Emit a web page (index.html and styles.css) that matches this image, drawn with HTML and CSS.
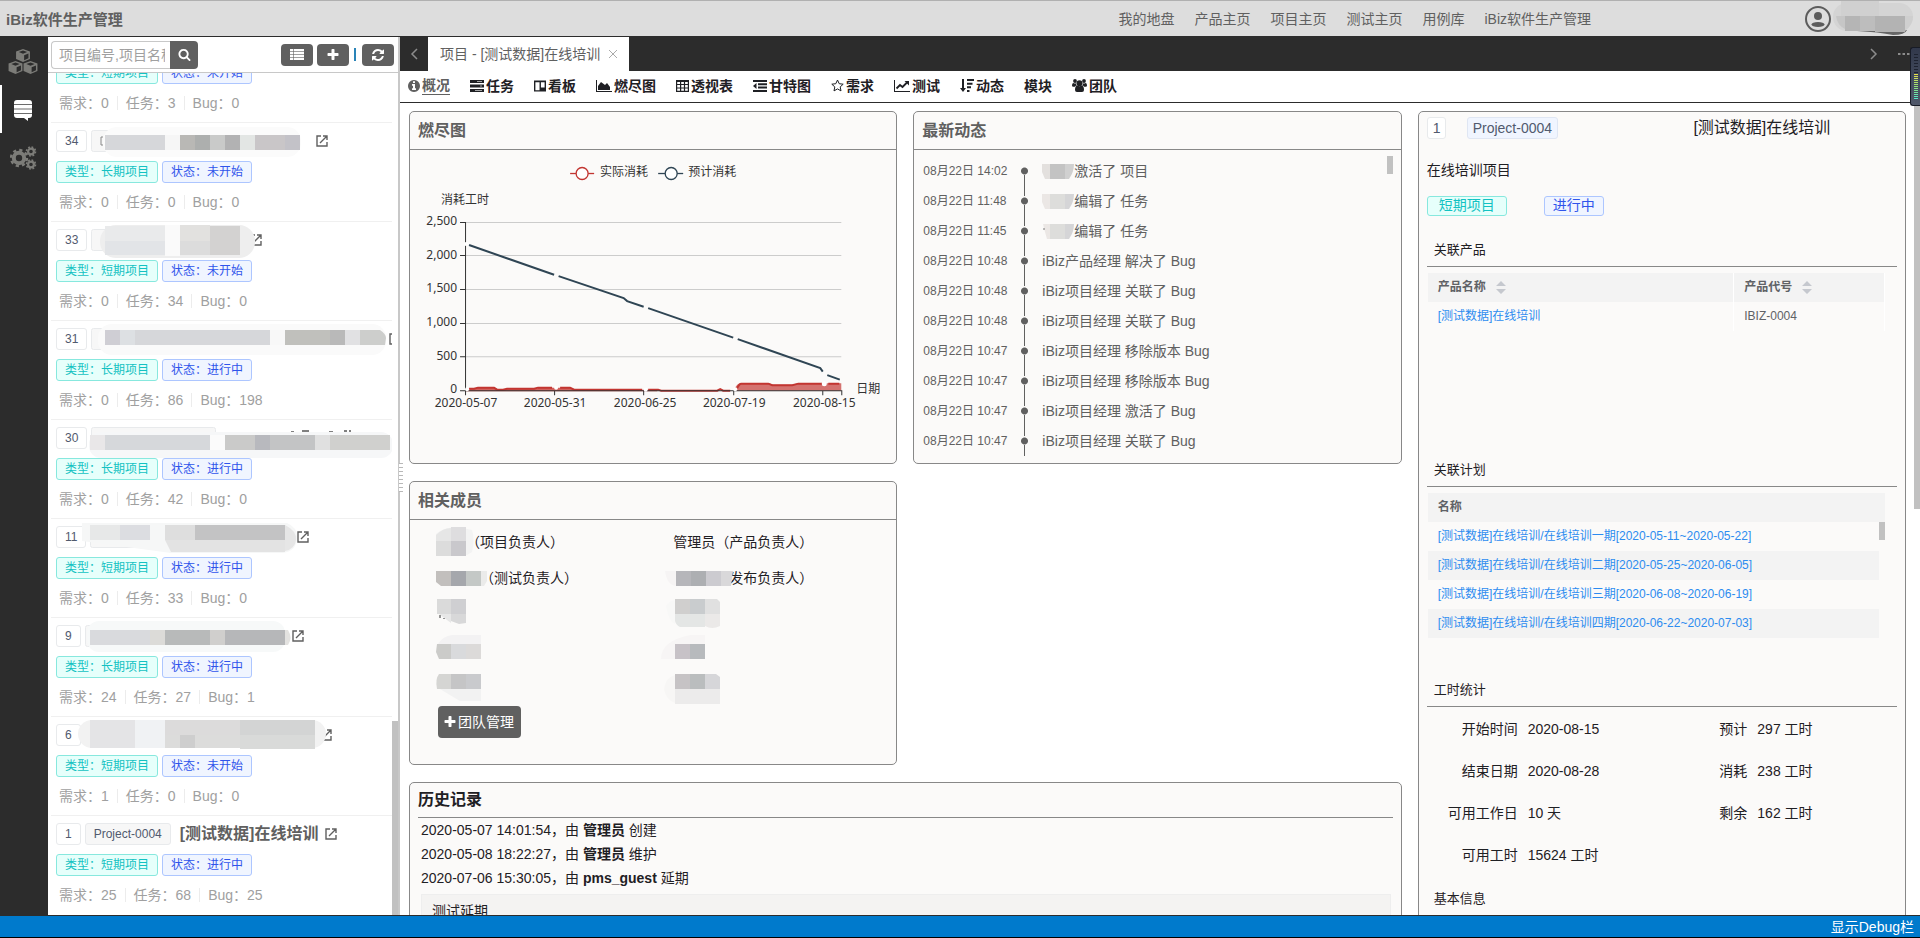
FILE: index.html
```html
<!DOCTYPE html>
<html lang="zh-CN">
<head>
<meta charset="utf-8">
<title>iBiz软件生产管理</title>
<link rel="stylesheet" href="styles.css">
</head>
<body>
<svg class="defs" aria-hidden="true">
  <symbol id="i-plus" viewBox="0 0 1792 1792"><path d="M1600 736v192q0 40-28 68t-68 28h-416v416q0 40-28 68t-68 28h-192q-40 0-68-28t-28-68v-416h-416q-40 0-68-28t-28-68v-192q0-40 28-68t68-28h416v-416q0-40 28-68t68-28h192q40 0 68 28t28 68v416h416q40 0 68 28t28 68z"/></symbol>
  <symbol id="i-search" viewBox="0 0 1792 1792"><path d="M1216 832q0-185-131.500-316.500t-316.500-131.500-316.500 131.500-131.500 316.500 131.500 316.500 316.500 131.500 316.500-131.500 131.500-316.500zm512 832q0 52-38 90t-90 38q-54 0-90-38l-343-342q-179 124-399 124-143 0-273.500-55.500t-225-150-150-225-55.500-273.500 55.500-273.500 150-225 225-150 273.500-55.500 273.500 55.500 225 150 150 225 55.500 273.500q0 220-124 399l343 343q37 37 37 90z"/></symbol>
  <symbol id="i-refresh" viewBox="128 128 1536 1536"><path d="M1639 1056q0 5-1 7-64 268-268 434.500t-478 166.500q-146 0-282.500-55t-243.500-157l-129 129q-19 19-45 19t-45-19-19-45v-448q0-26 19-45t45-19h448q26 0 45 19t19 45-19 45l-137 137q71 66 161 102t187 36q134 0 250-65t186-179q11-17 53-117 8-23 30-23h192q13 0 22.500 9.500t9.500 22.500zm25-800v448q0 26-19 45t-45 19h-448q-26 0-45-19t-19-45 19-45l138-138q-148-137-349-137-134 0-250 65t-186 179q-11 17-53 117-8 23-30 23h-199q-13 0-22.500-9.500t-9.500-22.500v-7q65-268 270-434.500t480-166.500q146 0 284 55.500t245 156.500l130-129q19-19 45-19t45 19 19 45z"/></symbol>
  <symbol id="i-info" viewBox="128 128 1536 1536"><path d="M1152 1376v-160q0-14-9-23t-23-9h-96v-512q0-14-9-23t-23-9h-320q-14 0-23 9t-9 23v160q0 14 9 23t23 9h96v320h-96q-14 0-23 9t-9 23v160q0 14 9 23t23 9h448q14 0 23-9t9-23zm-128-896v-160q0-14-9-23t-23-9h-192q-14 0-23 9t-9 23v160q0 14 9 23t23 9h192q14 0 23-9t9-23zm640 416q0 209-103 385.500t-279.500 279.500-385.500 103-385.500-103-279.500-279.500-103-385.500 103-385.500 279.500-279.500 385.500-103 385.500 103 279.500 279.500 103 385.500z"/></symbol>
  <symbol id="i-open" viewBox="0 0 12 12"><path d="M5 1H1v10h10V7M7 1h4v4M11 1 4 8" fill="none" stroke="currentColor" stroke-width="1.4"/></symbol>
  <symbol id="i-sort" viewBox="0 0 10 13"><path d="M0 5 5 0l5 5zM0 8h10l-5 5z"/></symbol>
  <symbol id="i-cube" viewBox="0 0 16 15"><path d="M8 0l8 3v8.500L8 15l-8-3.500V3z"/><path d="M8 1.800 12.800 3.600 8 5.600 3.200 3.600zM9.300 7.200l5-2.100v5.600l-5 2.300z" fill="#2c2c2c"/></symbol>
</svg>

<header class="topbar">
  <h1 class="brand">iBiz软件生产管理</h1>
  <nav class="topnav">
    <a href="#">我的地盘</a><a href="#">产品主页</a><a href="#">项目主页</a><a href="#">测试主页</a><a href="#">用例库</a><a href="#">iBiz软件生产管理</a>
  </nav>
  <div class="user">
    <svg class="avatar" width="26" height="26" viewBox="0 0 26 26"><circle cx="13" cy="13" r="12" fill="none" stroke="#5c5c5c" stroke-width="2"/><circle cx="13" cy="10" r="4" fill="#5c5c5c"/><ellipse cx="13" cy="18.500" rx="6.500" ry="2.600" fill="#5c5c5c"/></svg>
    <svg width="80" height="36" viewBox="0 0 80 36"><rect y="2" width="80" height="28" rx="14" fill="#d4d4d4"/><path d="M8 0h38v15H8z" fill="#d0d0d0"/><path d="M24 29h50q-2 5-14 5-14-3-36-4z" fill="#666"/><path d="M3 15h9v13Q4 24 3 15z" fill="#c6c6c6"/><path d="M12 15h15v15H12z" fill="#b5b5b5"/><path d="M27 15h15v15H27z" fill="#bdbdbd"/><path d="M42 15h30v16H42z" fill="#b3b3b3"/><path d="M72 15h8q0 9-8 15z" fill="#cfcfcf"/></svg>
  </div>
</header>

<div class="workspace">
  <nav class="rail">
    <a href="#" class="rail-item" aria-label="产品"><svg width="30" height="26" viewBox="0 0 30 26" fill="#7c7c78"><use href="#i-cube" x="7.500" y="0" width="15" height="13"/><use href="#i-cube" x="0" y="12" width="15" height="13"/><use href="#i-cube" x="15" y="12" width="15" height="13"/></svg></a>
    <a href="#" class="rail-item rail-active" aria-label="项目"><svg width="18" height="21" viewBox="0 0 18 21"><path d="M3 0h12q3 0 3 3v12q0 3-3 3h-1v3l-4-3H3q-3 0-3-3V3q0-3 3-3z" fill="#fff"/><path d="M0 4.500h18M0 9h18M0 13.500h18" stroke="#2c2c2c" stroke-width=".7"/></svg></a>
    <a href="#" class="rail-item" aria-label="设置"><svg width="27" height="24" viewBox="0 0 27 24"><g fill="none" stroke="#7c7c78"><circle cx="9" cy="12" r="5.200" stroke-width="4"/><circle cx="9" cy="12" r="8" stroke-width="2.400" stroke-dasharray="3.200 3.083"/><circle cx="21" cy="5.500" r="2.900" stroke-width="2.200"/><circle cx="21" cy="5.500" r="4.500" stroke-width="1.600" stroke-dasharray="1.800 1.734"/><circle cx="21" cy="18.500" r="2.900" stroke-width="2.200"/><circle cx="21" cy="18.500" r="4.500" stroke-width="1.600" stroke-dasharray="1.800 1.734"/></g></svg></a>
  </nav>

  <aside class="projects">
    <div class="toolbar">
      <form class="search">
        <input type="text" placeholder="项目编号,项目名称" aria-label="项目编号,项目名称">
        <button type="button" aria-label="搜索"><svg class="glyph" width="13" height="13"><use href="#i-search"/></svg></button>
      </form>
      <div class="tools">
        <button type="button" aria-label="列表"><svg width="14" height="11" viewBox="0 0 14 11"><path d="M0 0h14v11H0z" fill="#fff"/><path d="M0 2.500h14M0 5.500h14M0 8.500h14M3.500 0v11" stroke="#606060" stroke-width=".6"/></svg></button>
        <button type="button" aria-label="新建"><svg class="glyph" width="14" height="14"><use href="#i-plus"/></svg></button>
        <span class="tool-sep"></span>
        <button type="button" aria-label="刷新"><svg class="glyph" width="12" height="12"><use href="#i-refresh"/></svg></button>
      </div>
    </div>
    <div class="list-wrap">
      <ul class="list">
        <li class="item">
          <div class="item-title"></div>
          <div class="tags"><span class="tag tag-type">类型：短期项目</span><span class="tag tag-state">状态：未开始</span></div>
          <div class="stats"><span>需求：0</span><span>任务：3</span><span>Bug：0</span></div>
        </li>
        <li class="item">
          <div class="item-title"><span class="badge">34</span>
            <svg class="mask" width="225" height="22"><g transform="translate(-40 -7)"><rect x="40.500" y="7.500" width="40" height="21" rx="2" fill="#f7f7f7" stroke="#e8eaec"/><path d="M52 14h-2v8h2" fill="none" stroke="#888"/><rect x="52" y="4" width="198" height="30" rx="14" fill="#fbfbfb"/><path d="M54 12h60v15H54z" fill="#d6d7da"/><path d="M114 12h15v15h-15z" fill="#f6f6f6"/><path d="M129 12h15v15h-15z" fill="#b9b8b5"/><path d="M144 12h15v15h-15z" fill="#adafae"/><path d="M159 12h15v15h-15z" fill="#c9cac9"/><path d="M174 12h15v15h-15z" fill="#b2b2b3"/><path d="M189 12h15v15h-15z" fill="#e3e6e4"/><path d="M204 12h30v15h-30z" fill="#c9c6c8"/><path d="M234 12h15v15h-15z" fill="#c3c2c8"/></g></svg>
            <a href="#" class="open" aria-label="打开"><svg width="12" height="12"><use href="#i-open"/></svg></a></div>
          <div class="tags"><span class="tag tag-type">类型：长期项目</span><span class="tag tag-state">状态：未开始</span></div>
          <div class="stats"><span>需求：0</span><span>任务：0</span><span>Bug：0</span></div>
        </li>
        <li class="item">
          <div class="item-title"><span class="badge">33</span>
            <svg class="mask" width="159" height="22"><g transform="translate(-40 -7)"><rect x="40.500" y="7.500" width="40" height="21" rx="2" fill="#f7f7f7" stroke="#e8eaec"/><rect x="49" y="3" width="155" height="33" rx="16" fill="#eeeeee"/><path d="M54 4h60v15H54z" fill="#e9eaeb"/><path d="M54 19h60v14H54z" fill="#e2e4e7"/><path d="M114 3h15v31h-15z" fill="#fafafa"/><path d="M129 3h30v16h-30z" fill="#e2e1df"/><path d="M129 19h30v14h-30z" fill="#dcdcdc"/><path d="M159 4h30v29h-30z" fill="#d3d2d1"/></g></svg>
            <a href="#" class="open" aria-label="打开"><svg width="12" height="12"><use href="#i-open"/></svg></a></div>
          <div class="tags"><span class="tag tag-type">类型：短期项目</span><span class="tag tag-state">状态：未开始</span></div>
          <div class="stats"><span>需求：0</span><span>任务：34</span><span>Bug：0</span></div>
        </li>
        <li class="item">
          <div class="item-title"><span class="badge">31</span>
            <svg class="mask" width="298" height="22"><g transform="translate(-40 -7)"><rect x="40.500" y="7.500" width="40" height="21" rx="2" fill="#f7f7f7" stroke="#e8eaec"/><rect x="47" y="3" width="288" height="31" rx="14" fill="#fafafa"/><path d="M54 9h15v15H54z" fill="#cfced4"/><path d="M69 9h15v15H69z" fill="#dde0e3"/><path d="M84 9h135v15H84z" fill="#d6d7da"/><path d="M219 9h15v15h-15z" fill="#f8f8f8"/><path d="M234 9h45v15h-45z" fill="#c0c0bc"/><path d="M279 9h15v15h-15z" fill="#b9b9b9"/><path d="M294 9h15v15h-15z" fill="#e1e1e3"/><path d="M309 9h20q6 4 6 8l-1 7h-25z" fill="#cdcecc"/></g></svg>
            <a href="#" class="open" aria-label="打开"><svg width="12" height="12"><use href="#i-open"/></svg></a></div>
          <div class="tags"><span class="tag tag-type">类型：长期项目</span><span class="tag tag-state">状态：进行中</span></div>
          <div class="stats"><span>需求：0</span><span>任务：86</span><span>Bug：198</span></div>
        </li>
        <li class="item">
          <div class="item-title"><span class="badge">30</span>
            <svg class="mask" width="301" height="22"><g transform="translate(-40 -7)"><rect x="40.500" y="7.500" width="124" height="21" rx="2" fill="#f7f7f7" stroke="#e8eaec"/><path d="M240 12h3m8-1h7m20 1h4m11-1h3m2 0h2" stroke="#555" stroke-width="1.500"/><rect x="38" y="12" width="304" height="26" rx="12" fill="#f6f7f8"/><path d="M39 15h15v15H39z" fill="#e9e7e8"/><path d="M54 15h105v15H54z" fill="#d6d8db"/><path d="M159 15h15v15h-15z" fill="#fbfbfb"/><path d="M174 15h30v15h-30z" fill="#cacac9"/><path d="M204 15h15v15h-15z" fill="#b8b9be"/><path d="M219 15h45v15h-45z" fill="#c3c4c5"/><path d="M264 15h15v15h-15z" fill="#e0e0e0"/><path d="M279 15h60v15h-60z" fill="#d0d0ce"/></g></svg></div>
          <div class="tags"><span class="tag tag-type">类型：长期项目</span><span class="tag tag-state">状态：进行中</span></div>
          <div class="stats"><span>需求：0</span><span>任务：42</span><span>Bug：0</span></div>
        </li>
        <li class="item">
          <div class="item-title"><span class="badge">11</span>
            <svg class="mask" width="207" height="22"><g transform="translate(-39 -7)"><rect x="39.500" y="7.500" width="60" height="21" rx="2" fill="#f7f7f7" stroke="#e8eaec"/><path d="M31 4h205q10 4 10 14 0 14-14 16H120L31 22z" fill="#f6f7f7"/><path d="M39 6h30v15H39z" fill="#e7e8e8"/><path d="M69 6h30v15H69z" fill="#dcdde1"/><path d="M114 6h30v15h-30z" fill="#dedede"/><path d="M144 6h90v15h-90z" fill="#c3c3c4"/><path d="M114 21h120v12H120z" fill="#e3e3e3"/><path d="M234 6q12 6 11 15t-11 11z" fill="#e6e6e6"/></g></svg>
            <a href="#" class="open" aria-label="打开"><svg width="12" height="12"><use href="#i-open"/></svg></a></div>
          <div class="tags"><span class="tag tag-type">类型：短期项目</span><span class="tag tag-state">状态：进行中</span></div>
          <div class="stats"><span>需求：0</span><span>任务：33</span><span>Bug：0</span></div>
        </li>
        <li class="item">
          <div class="item-title"><span class="badge">9</span>
            <svg class="mask" width="207" height="22"><g transform="translate(-34 -7)"><rect x="34.500" y="7.500" width="40" height="21" rx="2" fill="#f7f7f7" stroke="#e8eaec"/><rect x="36" y="3" width="198" height="31" rx="12" fill="#f7f9f9"/><path d="M39 12h60v15H39z" fill="#d9dadd"/><path d="M99 12h15v15H99z" fill="#dcdbd8"/><path d="M114 12h45v15h-45z" fill="#b8baba"/><path d="M159 12h15v15h-15z" fill="#d0cfcd"/><path d="M174 12h60v15h-60z" fill="#b6b7b9"/><path d="M234 12h3q5 8 0 15h-3z" fill="#e3e2e0"/></g></svg>
            <a href="#" class="open" aria-label="打开"><svg width="12" height="12"><use href="#i-open"/></svg></a></div>
          <div class="tags"><span class="tag tag-type">类型：长期项目</span><span class="tag tag-state">状态：进行中</span></div>
          <div class="stats"><span>需求：24</span><span>任务：27</span><span>Bug：1</span></div>
        </li>
        <li class="item">
          <div class="item-title"><span class="badge">6</span>
            <svg class="mask" width="235" height="22"><g transform="translate(-34 -7)"><rect x="27" y="3" width="248" height="28" rx="14" fill="#f2f2f2"/><path d="M39 3h45v28H39z" fill="#e4e4e6"/><path d="M84 3h30v28H84z" fill="#f0f2f4"/><path d="M114 3h75v15h-75z" fill="#dcdbdb"/><path d="M114 18h75v13h-75z" fill="#dcdcdb"/><path d="M129 18h15v13h-15z" fill="#cecece"/><path d="M189 3h75v15h-75z" fill="#d3d4d4"/><path d="M189 18h75v14h-75z" fill="#d9dad9"/></g></svg>
            <a href="#" class="open" aria-label="打开"><svg width="12" height="12"><use href="#i-open"/></svg></a></div>
          <div class="tags"><span class="tag tag-type">类型：短期项目</span><span class="tag tag-state">状态：未开始</span></div>
          <div class="stats"><span>需求：1</span><span>任务：0</span><span>Bug：0</span></div>
        </li>
        <li class="item">
          <div class="item-title"><span class="badge">1</span><span class="badge badge-code">Project-0004</span><strong class="name">[测试数据]在线培训</strong><a href="#" class="open" aria-label="打开"><svg width="12" height="12"><use href="#i-open"/></svg></a></div>
          <div class="tags"><span class="tag tag-type">类型：短期项目</span><span class="tag tag-state">状态：进行中</span></div>
          <div class="stats"><span>需求：25</span><span>任务：68</span><span>Bug：25</span></div>
        </li>
      </ul>
      <div class="track track-list"><span class="thumb"></span></div>
    </div>
  </aside>

  <main class="main">
    <div class="grip"></div>
    <div class="tabbar">
      <button type="button" class="tab-arrow" aria-label="向左"><svg width="8" height="12" viewBox="0 0 8 12"><path d="M7 1 2 6l5 5" fill="none" stroke="#8c8c8c" stroke-width="1.500"/></svg></button>
      <div class="tab">项目 - [测试数据]在线培训<button type="button" class="tab-close" aria-label="关闭"><svg width="8" height="8" viewBox="0 0 8 8"><path d="m0 0 8 8M8 0 0 8" stroke="#aaa"/></svg></button></div>
      <button type="button" class="tab-arrow tab-right" aria-label="向右"><svg width="8" height="12" viewBox="0 0 8 12"><path d="m1 1 5 5-5 5" fill="none" stroke="#8c8c8c" stroke-width="1.500"/></svg></button>
      <button type="button" class="tab-more" aria-label="更多"><svg width="12" height="2"><path d="M0 1h2.500m2 0H7m2 0h2.500" stroke="#8c8c8c" stroke-width="2"/></svg></button>
    </div>
    <nav class="subnav">
      <a href="#" class="current"><svg class="glyph" width="12" height="12"><use href="#i-info"/></svg><span>概况</span></a>
      <a href="#"><svg width="14" height="12" viewBox="0 0 14 12"><path d="M0 0h14v3H0zM0 4.500h14v3H0zM0 9h14v3H0z"/><path d="M7 1.500h5M5 10.500h7M10 6h2" stroke="#fff" stroke-width=".6"/></svg><span>任务</span></a>
      <a href="#"><svg width="12" height="12" viewBox="0 0 13 12"><path d="M0 0h13v12H0zM1.500 2v8.500H6V2zM7.500 2v5.500h4V2z" fill-rule="evenodd"/></svg><span>看板</span></a>
      <a href="#"><svg width="16" height="12" viewBox="0 0 16 12"><path d="M0 0h1v11h15v1H0zM2 10V6l3-4 4 3 2-2 3 4v3z"/></svg><span>燃尽图</span></a>
      <a href="#"><svg width="13" height="12" viewBox="0 0 13 12"><path d="M.6 1h11.800v10.400H.6zM.6 4.500h11.800M.6 8h11.800M4.600 1v10.400M8.500 1v10.400" fill="none" stroke="#1f2024" stroke-width="1.200"/><path d="M0 0h13v2H0z"/></svg><span>透视表</span></a>
      <a href="#"><svg width="14" height="12" viewBox="0 0 14 12"><path d="M0 0h14v2H0zM5 3.300h9v2H5zM5 6.600h9v2H5zM0 10h14v2H0zM3.500 3v6L0 6z"/></svg><span>甘特图</span></a>
      <a href="#"><svg width="13" height="13" viewBox="0 0 13 13"><path d="m6.500 1 1.700 3.700 4 .5-3 2.700.8 4-3.500-2-3.500 2 .8-4-3-2.700 4-.5z" fill="none" stroke="#1f2024"/></svg><span>需求</span></a>
      <a href="#"><svg width="16" height="12" viewBox="0 0 16 12"><path d="M0 0h1v11h15v1H0z"/><path d="m2.500 8.500 3.500-3.500 2.500 2L13 2.500" fill="none" stroke="#1f2024" stroke-width="1.800"/><path d="M10.500 1H15v4.500z"/></svg><span>测试</span></a>
      <a href="#"><svg width="14" height="13" viewBox="0 0 14 13"><path d="M2 0h2v9h2l-3 4-3-4h2zM7 0h7v2H7zM7 3.700h5.500v2H7zM7 7.300h4v2H7zM7 11h2.500v2H7z"/></svg><span>动态</span></a>
      <a href="#"><span>模块</span></a>
      <a href="#"><svg width="15" height="13" viewBox="0 0 15 13"><circle cx="7.500" cy="4.200" r="3"/><circle cx="3" cy="2" r="1.900"/><circle cx="12" cy="2" r="1.900"/><path d="M3 11q0-4.500 2.500-4.500 2 1.500 4 0Q12 6.500 12 11q0 2-2 2H5q-2 0-2-2zM0 6.500Q0 4 1.300 4q1 .8 2.500.3.200 1.400 1 2.200-1 0-2 1.200H1.300Q0 7.700 0 6.500zM15 6.500Q15 4 13.700 4q-1 .8-2.500.3-.2 1.400-1 2.200 1 0 2 1.200h1.500q1.300 0 1.300-1.200z"/></svg><span>团队</span></a>
    </nav>

    <div class="scroll">
      <div class="board">
        <section class="card">
          <h2 class="card-head">燃尽图</h2>
          <svg class="chart" viewBox="0 0 486 313" role="img" aria-label="燃尽图">
            <g transform="translate(-410 -150)">
              <g stroke-width="1.300" fill="#fff"><path d="M570 173.500h24" stroke="#c23531"/><circle cx="582" cy="173.500" r="6" stroke="#c23531"/><path d="M658 173.500h25" stroke="#2f4554"/><circle cx="671" cy="173.500" r="6" stroke="#2f4554"/></g>
              <g class="chart-text"><text x="600" y="176">实际消耗</text><text x="688" y="176">预计消耗</text><text x="465" y="204" text-anchor="middle">消耗工时</text>
              <g text-anchor="end"><text x="457" y="225">2,500</text><text x="457" y="259">2,000</text><text x="457" y="292">1,500</text><text x="457" y="326">1,000</text><text x="457" y="360">500</text><text x="457" y="393">0</text></g>
              <g text-anchor="middle"><text x="466" y="407">2020-05-07</text><text x="555" y="407">2020-05-31</text><text x="645" y="407">2020-06-25</text><text x="734" y="407">2020-07-19</text><text x="824" y="407">2020-08-15</text></g><text x="856" y="393">日期</text></g>
              <path d="M466 222.500h375M466 255.500h375M466 289.500h375M466 323.500h375M466 356.500h375" stroke="#ccc"/>
              <path d="M465 388.500h8l4-1h18l3 2h6l4-1h28l3-1h32l4 2h82v1.500H465z" fill="#d2605c"/>
              <path d="M734 390v-1q3-6 6-6h29l4 1.500h19l6-1.500h43v7.500H734z" fill="#d4726f"/>
              <path d="M469 388.500h5l4-1h16l3 2h6l4-1h27l4-1h14M560 387.500h10l4 2h68M648 389.500h10l3 1h56l3-1.500 3 1.500h7M737 388q2-4.500 4-4.500h27l4 1.500h20l6-1.500h24M828 383.500h11" fill="none" stroke="#c23531" stroke-width="2"/>
              <path d="M465.500 222v168.500h376M460 222.500h5M460 255.500h5M460 289.500h5M460 323.500h5M460 356.500h5M460 390.500h5M465.500 390v5M554.500 390v5M643.500 390v5M733.500 390v5M822.500 390v5M841.500 390v5" fill="none" stroke="#333"/>
              <path d="m469 245 85 29.600M558.500 276l65 22 3.500 3 16.500 5.600M648 308l85 29.500M737.500 339l82.500 29 2.500 3.500M827 375l12.500 4.500" fill="none" stroke="#2f4554" stroke-width="2"/>
              <g fill="#fff"><circle cx="466" cy="244" r="2"/><circle cx="467" cy="389" r="2"/><circle cx="556" cy="387.500" r="2"/><circle cx="645.500" cy="389.500" r="2"/><circle cx="735" cy="389" r="2"/><circle cx="824" cy="383.500" r="2.500"/></g>
            </g>
          </svg>
        </section>

        <section class="card">
          <h2 class="card-head">最新动态</h2>
          <div class="feed-wrap">
            <ol class="feed">
              <li><time>08月22日 14:02</time><i class="dot"></i><span><svg class="who" width="32" height="15"><path d="M0 0h8v15H3L0 8z" fill="#e3e0de"/><path d="M8 0h15v15H8z" fill="#c3c3c3"/><path d="M23 0h9q0 8-5 15h-4z" fill="#d0d0d0"/></svg>激活了 项目</span></li>
              <li><time>08月22日 11:48</time><i class="dot"></i><span><svg class="who" width="32" height="15"><path d="M0 0h8v15H3L0 8z" fill="#ebe7e5"/><path d="M8 0h15v15H8z" fill="#dddddb"/><path d="M23 0h9q0 8-5 15h-4z" fill="#d5d5d7"/></svg>编辑了 任务</span></li>
              <li><time>08月22日 11:45</time><i class="dot"></i><span><svg class="who" width="32" height="15"><path d="M1 0h7v15H5L3 8z" fill="#ebe7e5"/><path d="M1 5h2" stroke="#777"/><path d="M8 0h15v15H8z" fill="#dddddb"/><path d="M23 0h9q0 8-5 15h-4z" fill="#d5d5d7"/></svg>编辑了 任务</span></li>
              <li><time>08月22日 10:48</time><i class="dot"></i><span>iBiz产品经理 解决了 Bug</span></li>
              <li><time>08月22日 10:48</time><i class="dot"></i><span>iBiz项目经理 关联了 Bug</span></li>
              <li><time>08月22日 10:48</time><i class="dot"></i><span>iBiz项目经理 关联了 Bug</span></li>
              <li><time>08月22日 10:47</time><i class="dot"></i><span>iBiz项目经理 移除版本 Bug</span></li>
              <li><time>08月22日 10:47</time><i class="dot"></i><span>iBiz项目经理 移除版本 Bug</span></li>
              <li><time>08月22日 10:47</time><i class="dot"></i><span>iBiz项目经理 激活了 Bug</span></li>
              <li><time>08月22日 10:47</time><i class="dot"></i><span>iBiz项目经理 关联了 Bug</span></li>
            </ol>
            <div class="track"><span class="thumb"></span></div>
          </div>
        </section>

        <section class="card detail">
          <div class="detail-top"><span class="badge badge-big">1</span><span class="badge badge-project">Project-0004</span><h2>[测试数据]在线培训</h2></div>
          <p class="desc">在线培训项目</p>
          <div class="detail-tags"><span class="tag tag-type tag-wide">短期项目</span><span class="tag tag-state tag-mid">进行中</span></div>
          <h3 class="section-title">关联产品</h3>
          <div class="section-body">
            <table class="grid">
              <thead><tr><th class="col-name">产品名称<svg class="sort" width="10" height="13"><use href="#i-sort"/></svg></th><th>产品代号<svg class="sort" width="10" height="13"><use href="#i-sort"/></svg></th></tr></thead>
              <tbody><tr><td><a href="#">[测试数据]在线培训</a></td><td>IBIZ-0004</td></tr></tbody>
            </table>
          </div>
          <h3 class="section-title">关联计划</h3>
          <div class="section-body">
            <div class="plan-head">名称</div>
            <div class="plan-wrap">
              <table class="grid striped">
                <tbody>
                  <tr><td><a href="#">[测试数据]在线培训/在线培训一期[2020-05-11~2020-05-22]</a></td></tr>
                  <tr><td><a href="#">[测试数据]在线培训/在线培训二期[2020-05-25~2020-06-05]</a></td></tr>
                  <tr><td><a href="#">[测试数据]在线培训/在线培训三期[2020-06-08~2020-06-19]</a></td></tr>
                  <tr><td><a href="#">[测试数据]在线培训/在线培训四期[2020-06-22~2020-07-03]</a></td></tr>
                </tbody>
              </table>
              <div class="track"><span class="thumb"></span></div>
            </div>
          </div>
          <h3 class="section-title">工时统计</h3>
          <dl class="hours">
            <dt>开始时间</dt><dd>2020-08-15</dd><dt>预计</dt><dd>297 工时</dd>
            <dt>结束日期</dt><dd>2020-08-28</dd><dt>消耗</dt><dd>238 工时</dd>
            <dt>可用工作日</dt><dd>10 天</dd><dt>剩余</dt><dd>162 工时</dd>
            <dt>可用工时</dt><dd>15624 工时</dd>
          </dl>
          <h3 class="section-title">基本信息</h3>
        </section>

        <section class="card">
          <h2 class="card-head">相关成员</h2>
          <div class="members">
            <div class="member"><svg width="28" height="30"><path d="M-2 7Q6 0 20 0l14 3q3 10 0 22l-5 3H-2z" fill="#f3f3f3"/><path d="M-2 8Q5 1 13 1v13H-2z" fill="#e6e6e6"/><path d="M13 0h15v14H13z" fill="#dedddf"/><path d="M-2 14h15v15H-2z" fill="#dcdcdc"/><path d="M13 14h15v15H13z" fill="#c9c8cc"/></svg>（项目负责人）</div>
            <div class="member">管理员（产品负责人）</div>
            <div class="member"><svg width="42" height="15"><path d="M-2 0h15v15H3l-5-4z" fill="#c2bfbd"/><path d="M13 0h15v15H13z" fill="#a5a7ac"/><path d="M28 0h15v15H28z" fill="#c4c8c6"/><path d="M43 0h6v10l-3 5h-3z" fill="#ebebea"/></svg>（测试负责人）</div>
            <div class="member"><svg width="42" height="15"><path d="M-8 0H3v15Q-6 14-8 0z" fill="#f6f4f4"/><path d="M3 0h15v15H3z" fill="#b6b6ba"/><path d="M18 0h15v15H18z" fill="#adafb2"/><path d="M33 0h15v15H33z" fill="#cccbd0"/><path d="M48 0h12l-2 15H48z" fill="#d9d8da"/></svg>（发布负责人）</div>
            <div class="member"><svg width="42" height="30"><path d="M-1 0h14v15H-1z" fill="#dadada"/><path d="M13 0h15v15H13z" fill="#cfcfd2"/><path d="M1 15h12v9z" fill="#e7e7e7"/><path d="M13 15h15v9l-7 1-8-3z" fill="#d8d8d9"/><path d="M2 16v3m4 0v1" stroke="#333"/></svg></div>
            <div class="member"><svg width="42" height="30"><path d="M-7 7Q-4 2 2 1v24Q-4 23-7 7z" fill="#f8f8f7"/><path d="M2 0h15v15H2z" fill="#d0cfce"/><path d="M17 0h15v15H17z" fill="#c9ccce"/><path d="M32 0h12l3 3v12H32z" fill="#e0e0e0"/><path d="M2 15h30v13H7q-4-2-5-6z" fill="#e4e6e5"/><path d="M32 15h15v12q-8 4-15 0z" fill="#ebe9e8"/></svg></div>
            <div class="member"><svg width="42" height="30"><path d="M0 9Q5 1 14 0h29v9H0z" fill="#f3f2f3"/><path d="M-1 9h14v15H1l-3-7z" fill="#cbcbc9"/><path d="M13 9h15v15H13z" fill="#d9dadc"/><path d="M28 9h15v15H28z" fill="#dcdad9"/></svg></div>
            <div class="member"><svg width="42" height="30"><path d="M-12 24Q-12 6 17 0h15v24z" fill="#f7f5f5"/><path d="M2 9h15v15H2z" fill="#c7c2c7"/><path d="M17 9h15v15H17z" fill="#b7babd"/></svg></div>
            <div class="member"><svg width="42" height="30"><path d="M1 3h12v15H-1q-2-10 2-15z" fill="#d5d5d3"/><path d="M13 3h15v15H13z" fill="#c5c5c6"/><path d="M28 3h15v15H28z" fill="#c9cacd"/><path d="M2 18h41v12H22z" fill="#f2f2f2"/></svg></div>
            <div class="member"><svg width="42" height="30"><path d="M-9 18Q-7 6 2 4v28Q-7 29-9 18z" fill="#f7f6f5"/><path d="M2 3h15v15H2z" fill="#c6c3c5"/><path d="M17 3h15v15H17z" fill="#babdbe"/><path d="M32 3h11l4 3v12H32z" fill="#d6d6d9"/><path d="M2 18h45v15H2z" fill="#ecebeb"/></svg></div>
            <button type="button" class="team"><svg class="glyph" width="14" height="14"><use href="#i-plus"/></svg>团队管理</button>
          </div>
        </section>

        <section class="card history">
          <h2>历史记录</h2>
          <ul>
            <li>2020-05-07 14:01:54，由 <b>管理员</b> 创建</li>
            <li>2020-05-08 18:22:27，由 <b>管理员</b> 维护</li>
            <li>2020-07-06 15:30:05，由 <b>pms_guest</b> 延期</li>
          </ul>
          <p class="note">测试延期</p>
        </section>
      </div>
      <div class="track track-main"><span class="thumb"></span></div>
    </div>
  </main>
</div>

<footer class="debugbar"><button type="button">显示Debug栏</button></footer>

<div class="meter"><span class="meter-off"></span><span class="meter-on"></span></div>
</body>
</html>
```
FILE: styles.css
```css
* { box-sizing: border-box; margin: 0; padding: 0; }
html, body { height: 100%; }
body {
  display: flex;
  flex-direction: column;
  overflow: hidden;
  background: #fff;
  color: #1f2024;
  font: 14px/22px "Liberation Sans", "Noto Sans CJK SC", sans-serif;
}
a { color: inherit; text-decoration: none; }
button { font: inherit; border: 0; cursor: pointer; }
ul, ol { list-style: none; }
svg { display: block; flex: none; }
.defs { position: absolute; width: 0; height: 0; }
.glyph { fill: currentColor; }

/* top bar */
.topbar {
  display: flex;
  flex: none;
  align-items: center;
  height: 37px;
  padding-left: 6px;
  padding-right: 7px;
  background: #ddd;
  border-top: 1px solid #b0b0b0;
  border-bottom: 1px solid #2c2c2c;
  color: #606060;
}
.brand { flex: 1; padding-top: 2px; font-size: 15px; }
.topnav { display: flex; gap: 20px; margin-right: 214px; }
.user { display: flex; align-items: center; gap: 2px; }

.workspace { display: flex; flex: 1; min-height: 0; }

/* icon rail */
.rail { flex: none; width: 48px; background: #2c2c2c; }
.rail-item { display: flex; align-items: center; justify-content: center; height: 48px; padding-right: 2px; padding-top: 2px; }
.rail-active { box-shadow: inset 2px 0 #fff; }

/* project list */
.projects {
  display: flex;
  flex: none;
  flex-direction: column;
  width: 352px;
  border-right: 2px solid #c8c8c8;
}
.toolbar {
  display: flex;
  flex: none;
  align-items: center;
  justify-content: space-between;
  height: 36px;
  padding: 0 4px 0 3px;
  border-bottom: 1px solid #c8c8c8;
}
.search { display: flex; height: 28px; }
.search input {
  width: 119px;
  padding: 0 5px 0 7px;
  border: 1px solid #c8c8c8;
  border-right: 0;
  border-radius: 4px 0 0 4px;
  font: inherit;
  color: #606060;
}
.search input::placeholder { color: #a0a0a0; }
.search button {
  display: flex;
  align-items: center;
  justify-content: center;
  width: 28px;
  border-radius: 0 4px 4px 0;
  background: #606060;
  color: #fff;
}
.tools { display: flex; align-items: center; gap: 4px; }
.tools button {
  display: flex;
  align-items: center;
  justify-content: center;
  width: 32px;
  height: 22px;
  border-radius: 4px;
  background: #606060;
  color: #fff;
}
.tool-sep { width: 2px; height: 13px; margin: 0 2px 0 1px; background: #2a84b8; }
.list-wrap { display: flex; flex: 1; min-height: 0; }
.list {
  display: flex;
  flex: 1;
  flex-direction: column;
  justify-content: flex-end;
  min-width: 0;
  padding-left: 3px;
  overflow: hidden;
}
.item { flex: none; padding: 7px 5px 8px; border-bottom: 1px solid #f0f0f0; white-space: nowrap; }
.item:last-child { border-bottom-color: transparent; }
.item-title { display: flex; align-items: center; height: 22px; margin-bottom: 9px; }
.badge {
  flex: none;
  height: 22px;
  margin-right: 4px;
  padding: 0 8px;
  border: 1px solid #e8eaec;
  border-radius: 3px;
  background: #fff;
  color: #515a6e;
  font-size: 12px;
  line-height: 21px;
}
.badge-code { background: #f7f7f7; }
.name { margin-left: 5px; margin-right: 7px; color: #606060; font-size: 16px; }
.mask { position: relative; z-index: 1; overflow: visible; }
.open { color: #606060; }
.tags { display: flex; gap: 4px; margin-bottom: 8px; }
.tag { height: 22px; padding: 0 8px; border: 1px solid; border-radius: 3px; font-size: 12px; line-height: 20px; }
.tag-type { background: #e6fffb; border-color: #87e8de; color: #13c2c2; }
.tag-state { background: #f0f5ff; border-color: #adc6ff; color: #2f54eb; }
.stats { display: flex; align-items: center; height: 22px; padding-left: 3px; color: #a0a0a0; }
.stats span + span { margin-left: 8px; padding-left: 8px; border-left: 1px solid #ececec; line-height: 14px; }

/* scroll thumbs */
.track { flex: none; width: 6px; }
.thumb { display: block; height: 18px; background: #c1c1c1; }
.track-list { display: flex; align-items: flex-end; }
.track-list .thumb { width: 6px; height: 23%; }
.track-main .thumb { height: 50%; }

/* main area */
.main { position: relative; display: flex; flex: 1; flex-direction: column; min-width: 0; }
.grip {
  position: absolute;
  left: -1px;
  top: 426px;
  width: 4px;
  height: 29px;
  background: repeating-linear-gradient(#b8b8b8 0 1px, #fff 1px 4px);
}
.tabbar { display: flex; flex: none; height: 34px; background: #2c2c2c; color: #606060; }
.tabbar button { display: flex; align-items: center; justify-content: center; background: none; }
.tab-arrow { width: 28px; }
.tab { display: flex; align-items: center; gap: 4px; padding: 0 7px 0 12px; background: #fff; white-space: nowrap; }
.tabbar .tab-close { width: 18px; height: 18px; }
.tab-right { margin-left: auto; }
.tab-more { width: 32px; }
.subnav {
  display: flex;
  flex: none;
  align-items: center;
  gap: 20px;
  height: 32px;
  padding-bottom: 2px;
  padding-left: 8px;
  border-bottom: 1px solid #2c2c2c;
  font-weight: bold;
  line-height: 18px;
}
.subnav a { display: flex; align-items: center; gap: 2px; fill: #1f2024; }
.subnav .current { color: #606060; fill: #606060; }
.subnav .current span { border-bottom: 1px solid #606060; }

.scroll { display: flex; flex: 1; min-height: 0; overflow: hidden; }
.board {
  display: grid;
  flex: 1;
  grid-template-columns: repeat(3, minmax(0, 1fr));
  grid-template-rows: auto auto 1fr;
  gap: 17px 16px;
  min-width: 0;
  padding: 8px 8px 0 9px;
}
.card { border: 1px solid #888; border-radius: 5px; background: #fbfaf9; }
.card-head { height: 38px; padding: 5px 8px 0; border-bottom: 1px solid #888; color: #606060; font-size: 16px; line-height: 28px; }
.chart { width: 100%; height: auto; }
.chart-text { fill: #333; font: 12px "Noto Sans", "Noto Sans CJK SC", sans-serif; }

/* activity feed */
.feed-wrap { display: flex; padding: 6px 8px 0 9px; color: #606060; }
.feed { flex: 1; }
.feed li { display: flex; align-items: center; height: 30px; }
.feed time { width: 98px; font-size: 12px; }
.feed span { display: flex; align-items: center; white-space: pre; }
.who { overflow: visible; }
.dot { display: flex; flex-direction: column; align-items: center; width: 7px; height: 30px; margin-right: 14px; background: radial-gradient(circle at 50% 15px, #606060 3px, transparent 4px); }
.dot::before { content: ""; width: 1px; height: 10px; margin-bottom: 9px; background: #606060; }
.dot::after { content: ""; flex: 1; width: 1px; background: #606060; }
.feed li:first-child .dot::before { background: none; }

/* members */
.members { display: grid; grid-template-columns: 1fr 1fr; padding: 4px 0 26px 28px; }
.member { display: flex; align-items: center; height: 36px; }
.member:nth-child(even) { padding-left: 6px; }
.member svg { position: relative; z-index: 1; overflow: visible; }
.team {
  display: flex;
  align-items: center;
  justify-self: start;
  gap: 1px;
  height: 32px;
  margin-top: 2px;
  padding: 0 7px 0 5px;
  border-radius: 4px;
  background: #606060;
  color: #fff;
}

/* project detail */
.detail { grid-column: 3; grid-row: 1 / 4; padding: 5px 8px 100px; }
.detail-top { display: grid; grid-template-columns: 40px 160px 1fr; justify-items: start; }
.detail-top h2 { justify-self: center; font-size: 16px; font-weight: normal; }
.badge-big { padding: 0 5px; font-size: 14px; }
.badge-project { padding: 0 5px; border-color: #dfe6f3; background: #f0f5ff; font-size: 14px; }
.desc { margin-top: 20px; }
.detail-tags { display: flex; gap: 37px; margin-top: 15px; }
.detail-tags .tag { height: 20px; font-size: 14px; line-height: 17px; }
.detail-tags .tag-wide { padding: 0 11px; }
.section-title { height: 31px; padding: 3px 7px 0; border-bottom: 1px solid #888; font-size: 13px; font-weight: normal; }
.detail-tags + .section-title { margin-top: 20px; }
.section-body { min-height: 189px; padding: 6px 12px 0 1px; }
.grid { width: 100%; border-collapse: collapse; color: #606266; font-size: 12px; }
.grid th, .grid td { height: 29px; padding: 0 10px 2px; border-right: 1px solid #fff; text-align: left; line-height: 22px; }
.grid th, .plan-head { background: #f3f3f3; }
.grid a { color: #2d8cf0; }
.col-name { width: 67%; }
.sort { display: inline-block; margin-left: 10px; vertical-align: middle; fill: #c5c8ce; }
.plan-head { height: 29px; padding: 0 10px; color: #606266; font-size: 12px; font-weight: bold; line-height: 29px; }
.plan-wrap { display: flex; }
.striped td { border-right: 0; }
.striped tr:nth-child(even) { background: #f3f3f3; }
.hours {
  display: grid;
  grid-template-columns: 91px 1fr 90px 1fr;
  column-gap: 10px;
  padding: 1px 20px 9px 0;
  line-height: 42px;
}
.hours dt { text-align: right; }

/* history */
.history { grid-column: 1 / 3; padding: 0 8px 60px; }
.history h2 { height: 35px; padding-top: 6px; border-bottom: 1px solid #888; font-size: 16px; }
.history ul { padding: 0 3px; line-height: 24px; }
.note { margin: 4px 2px 0 3px; padding: 5px 10px; border: 1px solid #eee; background: #f4f3f2; }

/* footer */
.debugbar {
  display: flex;
  flex: none;
  justify-content: flex-end;
  height: 23px;
  padding-right: 6px;
  border-top: 1px solid #2c2c2c;
  border-bottom: 1px solid #000;
  background: #007acc;
}
.debugbar button { background: none; color: #fff; line-height: 20px; }

/* load meter */
.meter {
  position: absolute;
  right: 0;
  top: 47px;
  width: 10px;
  height: 59px;
  padding: 6px 2px 0 3px;
  border: 1px solid #171b26;
  border-right: 0;
  border-radius: 3px 0 0 3px;
  background: linear-gradient(#31384b, #50586a);
}
.meter-off, .meter-on { display: block; height: 20px; background: repeating-linear-gradient(#1d2230 0 1px, transparent 1px 3px); }
.meter-on {
  height: 26px;
  background: repeating-linear-gradient(transparent 0 1px, #454d60 1px 2px), linear-gradient(#e8e04a, #8fe07a, #4fe8d0);
}
```
